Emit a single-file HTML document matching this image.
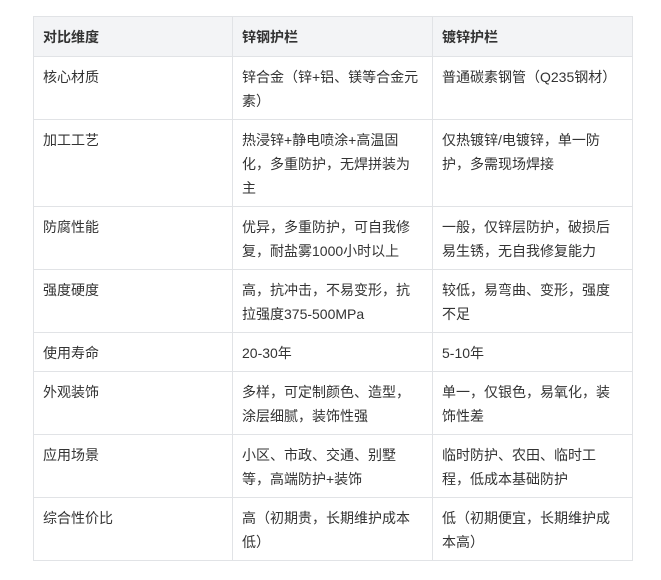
<!DOCTYPE html>
<html><head><meta charset="utf-8"><style>
html,body{margin:0;background:#fff;}
table{position:absolute;left:33px;top:16px;border-collapse:collapse;width:600px;table-layout:fixed;font-family:"Liberation Sans","Noto Sans CJK SC",sans-serif;font-size:14px;color:#333;}
td,th{border:1px solid #e1e3e6;padding:8px 9px 6px 9px;line-height:24px;vertical-align:top;text-align:left;}
th{background:#f3f4f6;font-weight:bold;padding:8px 9px 7px 9px;}
</style></head><body>
<table>
<colgroup><col style="width:199px"><col style="width:200px"><col style="width:200px"></colgroup>
<tr><th>对比维度</th><th>锌钢护栏</th><th>镀锌护栏</th></tr>
<tr><td>核心材质</td><td>锌合金（锌+铝、镁等合金元素）</td><td>普通碳素钢管（Q235钢材）</td></tr>
<tr><td>加工工艺</td><td>热浸锌+静电喷涂+高温固化，多重防护，无焊拼装为主</td><td>仅热镀锌/电镀锌，单一防护，多需现场焊接</td></tr>
<tr><td>防腐性能</td><td>优异，多重防护，可自我修复，耐盐雾1000小时以上</td><td>一般，仅锌层防护，破损后易生锈，无自我修复能力</td></tr>
<tr><td>强度硬度</td><td>高，抗冲击，不易变形，抗拉强度375-500MPa</td><td>较低，易弯曲、变形，强度不足</td></tr>
<tr><td>使用寿命</td><td>20-30年</td><td>5-10年</td></tr>
<tr><td>外观装饰</td><td>多样，可定制颜色、造型，涂层细腻，装饰性强</td><td>单一，仅银色，易氧化，装饰性差</td></tr>
<tr><td>应用场景</td><td>小区、市政、交通、别墅等，高端防护+装饰</td><td>临时防护、农田、临时工程，低成本基础防护</td></tr>
<tr><td>综合性价比</td><td>高（初期贵，长期维护成本低）</td><td>低（初期便宜，长期维护成本高）</td></tr>
</table>
</body></html>
